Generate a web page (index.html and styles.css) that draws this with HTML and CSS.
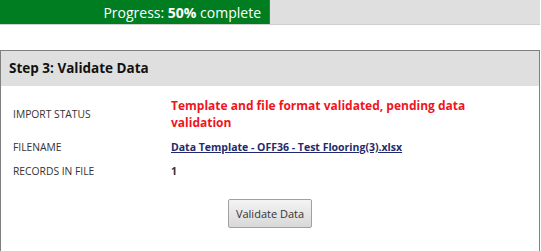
FILE: index.html
```html
<!DOCTYPE html>
<html>
<head>
<meta charset="utf-8">
<link rel="stylesheet" href="styles.css">
</head>
<body>
<div class="progress">
  <div class="progress-fill" style="width:50%">Progress: <b>50%</b> complete</div>
</div>
<div class="panel">
  <div class="panel-head">Step 3: Validate Data</div>
  <div class="panel-body">
    <div class="rows">
      <div class="label">IMPORT STATUS</div>
      <div class="value status">Template and file format validated, pending data validation</div>
      <div class="label">FILENAME</div>
      <div class="value"><a class="file" href="#">Data Template - OFF36 - Test Flooring(3).xlsx</a></div>
      <div class="label">RECORDS IN FILE</div>
      <div class="value count">1</div>
    </div>
    <div class="actions">
      <button class="btn">Validate Data</button>
    </div>
  </div>
</div>
</body>
</html>
```
FILE: styles.css
```css
html, body {
  margin: 0;
  padding: 0;
  background: #fff;
  font-family: "Open Sans", "DejaVu Sans", sans-serif;
  color: #222;
}
.progress {
  width: 540px;
  height: 24px;
  background: #dfdfdf;
  box-shadow: 0 1px 0 #cfcfcf;
  display: flex;
}
.progress-fill {
  background: #007c21;
  color: #fff;
  font-size: 14px;
  line-height: 25px;
  text-align: right;
  padding-right: 8px;
  box-sizing: border-box;
  border-right: 1px solid #0a9a2a;
}
.progress-fill b {
  font-weight: 700;
}
.panel {
  margin-top: 26px;
  width: 540px;
  box-sizing: border-box;
  border: 1px solid #808080;
  border-bottom: none;
  height: 201px;
}
.panel-head {
  background: #dfdfdf;
  height: 35px;
  line-height: 35px;
  padding-left: 8px;
  font-size: 13.5px;
  font-weight: 700;
  color: #111;
}
.panel-body {
  padding: 11px 12px 0 12px;
}
.rows {
  display: grid;
  grid-template-columns: 158px 1fr;
  align-items: center;
  row-gap: 8px;
}
.label {
  font-size: 10.3px;
  line-height: 16px;
  color: #333;
}
.value {
  font-size: 10.5px;
  line-height: 16px;
}
.status {
  color: #f0141e;
  font-size: 12px;
  font-weight: 700;
  line-height: 17px;
}
.file {
  color: #1f2a6e;
  font-weight: 700;
  text-decoration: underline;
}
.count {
  font-weight: 700;
  color: #333;
}
.actions {
  display: flex;
  justify-content: center;
  padding-top: 20px;
}
.btn {
  font-family: "Open Sans", sans-serif;
  font-size: 11px;
  color: #333;
  background: linear-gradient(#f4f4f4, #d8d8d8);
  border: 1px solid #a0a0a0;
  border-radius: 2px;
  padding: 0 7px;
  height: 29px;
}
```
